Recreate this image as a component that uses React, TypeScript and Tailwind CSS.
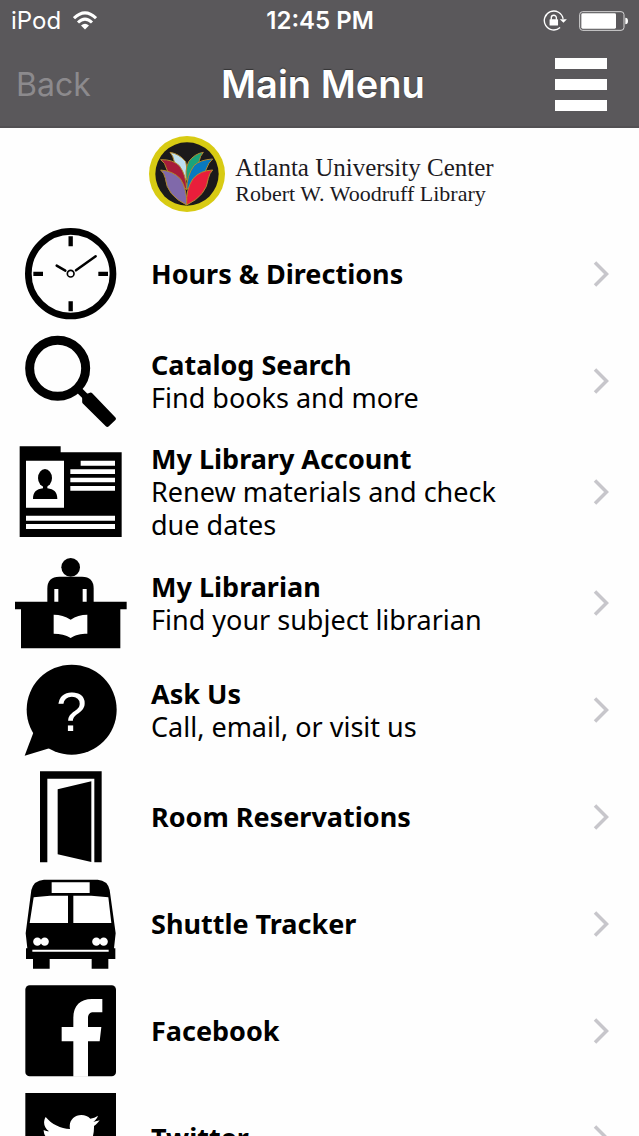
import type { ReactNode } from "react";

type MenuItem = {
  title: string;
  detail?: string;
  viewBox: string;
  icon: ReactNode;
};

const items: MenuItem[] = [
  {
    title: "Hours & Directions",
    viewBox: "45 21 336 276",
    icon: (
      <>
        <circle cx="212" cy="158" r="127" fill="none" stroke="#000" strokeWidth="20" />
        <path d="M212 46v30M212 241v30M100 158.500h29M295 158.500h29" stroke="#000" strokeWidth="13" />
        <path d="M228 148L287 106M196 149L170 134" stroke="#000" strokeWidth="7.500" strokeLinecap="round" />
        <circle cx="212" cy="158" r="10" fill="none" stroke="#000" strokeWidth="5" />
      </>
    ),
  },
  {
    title: "Catalog Search",
    detail: "Find books and more",
    viewBox: "45 342 336 276",
    icon: (
      <>
        <circle cx="173" cy="442" r="84" fill="none" stroke="#000" strokeWidth="27" />
        <path d="M232 502L262 532" stroke="#000" strokeWidth="20" />
        <path
          d="M253 528L272 521L341 593L322 611L253 543Z"
          stroke="#000"
          strokeWidth="13"
          strokeLinejoin="round"
        />
      </>
    ),
  },
  {
    title: "My Library Account",
    detail: "Renew materials and check due dates",
    viewBox: "45 31 336 276",
    icon: (
      <>
        <path d="M59 32H182V50H365V304H59Z" />
        <path
          d="M78 75H192V216H78ZM242 75H345V90H242ZM211 101H345V115H211ZM211 126H345V140H211ZM211 151H345V165H211ZM78 240H345V255H78ZM78 265H345V280H78Z"
          fill="#fff"
        />
        <ellipse cx="135" cy="127" rx="21" ry="27" />
        <path d="M129 148H142V158C162 160 172 170 172 190H99C99 170 109 160 129 158Z" />
      </>
    ),
  },
  {
    title: "My Librarian",
    detail: "Find your subject librarian",
    viewBox: "45 361 336 276",
    icon: (
      <>
        <circle cx="212" cy="392" r="28" />
        <path d="M142 498V456Q142 420 178 420H246Q281 420 281 456V498Z" />
        <path d="M45 495H380V518H361V635H63V518H45Z" />
        <path d="M163 457H175V495H163ZM248 457H260V495H248Z" fill="#fff" />
        <path
          d="M161 534C180 534 196 538 212 549C227 538 243 534 262 534V591C242 591 226 594 212 604C197 594 181 591 161 591Z"
          fill="#fff"
        />
      </>
    ),
  },
  {
    title: "Ask Us",
    detail: "Call, email, or visit us",
    viewBox: "45 24 336 276",
    icon: (
      <>
        <circle cx="215" cy="161" r="135" />
        <path d="M100 230L74 299L148 277L170 240Z" />
        <text
          x="214"
          y="225"
          textAnchor="middle"
          fill="#fff"
          className="font-['Liberation_Sans',sans-serif] text-[164px]"
        >
          ?
        </text>
      </>
    ),
  },
  {
    title: "Room Reservations",
    viewBox: "45 348 336 276",
    icon: <path d="M120 349H305V622H283V371H142V622H120ZM173 403L274 379V621L173 598Z" />,
  },
  {
    title: "Shuttle Tracker",
    viewBox: "45 24 336 276",
    icon: (
      <>
        <path d="M132 29H293Q323 31 329 60L347 190L342 235H346V267H325V296H275V267H149V296H99V267H78V235H82L77 190L94 60Q101 31 132 29Z" />
        <path
          d="M155 37H269V69H155ZM101 82L150 77H204V159H89ZM220 77H274L325 82L334 159H220ZM97 239H326V245H97Z"
          fill="#fff"
        />
        <g fill="#fff">
          <circle cx="112" cy="215" r="12.500" />
          <circle cx="134" cy="215" r="12.500" />
          <circle cx="289" cy="215" r="12.500" />
          <circle cx="311" cy="215" r="12.500" />
        </g>
      </>
    ),
  },
  {
    title: "Facebook",
    viewBox: "45 348 336 276",
    icon: (
      <>
        <rect x="76" y="349" width="272" height="273" rx="13" />
        <path
          d="M220 623V517H185V474H220V446C220 410 241 390 276 390H307V430H281C269 430 264 436 264 448V474H304L299 517H264V623Z"
          fill="#fff"
        />
      </>
    ),
  },
  {
    title: "Twitter",
    viewBox: "45 669 336 276",
    icon: (
      <>
        <rect x="76" y="672" width="272" height="272" />
        <path
          d="M137 744C155 766 182 779 210 780C205 755 223 738 244 738C255 738 264 742 271 749C279 748 287 744 294 740C291 748 286 754 280 758C287 757 293 756 299 753C295 760 289 766 282 771C284 832 239 874 181 874C161 874 142 868 126 858C145 860 163 855 177 844C161 843 149 833 144 819C150 820 155 820 160 818C143 814 131 800 131 783C136 785 142 787 147 787C132 777 128 759 137 744Z"
          fill="#fff"
        />
      </>
    ),
  },
];

function StatusBar() {
  return (
    <div className="flex h-[41px] items-center justify-between px-[11px] text-2xl">
      <div className="flex items-center gap-3">
        <span>iPod</span>
        <svg viewBox="0 0 72 56" className="h-[19px] w-6" fill="none" stroke="#fff" strokeWidth="9">
          <path d="M3 21Q36 -11 69 21" />
          <path d="M15 34Q36 14 57 34" />
          <path d="M24 43Q36 33 48 43L36 55Z" fill="#fff" stroke="none" />
        </svg>
      </div>
      <span className="font-semibold whitespace-nowrap">12:45 PM</span>
      <div className="flex items-center gap-3">
        <svg viewBox="0 0 70 62" className="h-[21px] w-6" fill="none" stroke="#fff">
          <path d="M59 26A28 28 0 1 0 50 52" strokeWidth="4" />
          <path d="M49 27H70L60 38Z" fill="#fff" stroke="none" />
          <rect x="19" y="27" width="25" height="19" rx="2" fill="#fff" stroke="none" />
          <path d="M24 29V23A7.500 7.500 0 0 1 39 23V29" strokeWidth="4" />
        </svg>
        <svg viewBox="0 0 147 60" className="h-5 w-[49px]">
          <rect x="2" y="2" width="133" height="56" rx="9" fill="none" stroke="#d6d5d6" strokeWidth="3" />
          <rect x="7" y="7" width="104" height="46" rx="4" fill="#fff" />
          <path d="M139 20Q147 20 147 30T139 40Z" fill="#fff" />
        </svg>
      </div>
    </div>
  );
}

function Emblem() {
  return (
    <svg viewBox="0 0 228 228" className="size-[76px] shrink-0">
      <circle cx="114" cy="114" r="114" fill="#d8cb13" />
      <circle cx="114" cy="114" r="95" fill="#1b191b" />
      <g stroke="#b28a2e" strokeWidth="3" strokeLinejoin="round">
        <path d="M63 49Q90 53 110 77Q119 105 113 132Q80 110 75 74Q73 60 63 49Z" fill="#bfe0f1" />
        <path d="M163 49Q137 53 119 77Q106 105 114 134Q147 110 151 74Q153 60 163 49Z" fill="#1aa37b" />
        <path d="M35 71Q72 70 91 89Q112 117 113 160Q66 139 53 99Q49 80 35 71Z" fill="#a71c3a" />
        <path d="M191 69Q153 71 135 89Q113 119 113 160Q159 139 172 99Q178 80 191 69Z" fill="#0879bf" />
        <path d="M35 102Q72 105 94 128Q115 160 113 207Q53 178 49 127Q46 112 35 102Z" fill="#8069aa" />
        <path d="M191 102Q154 103 132 128Q110 160 113 207Q173 178 178 127Q181 112 191 102Z" fill="#e91e3b" />
      </g>
    </svg>
  );
}

export default function App() {
  return (
    <div className="flex h-screen flex-col overflow-hidden bg-[#fefefe] text-black">
      <header className="shrink-0 bg-[#5a585b] font-[Inter,sans-serif] text-white shadow-[inset_0_-2px_0_#525053]">
        <StatusBar />
        <div className="flex h-[87px] items-center justify-between pr-8 pl-4">
          <button type="button" disabled className="text-[32px] text-[#8c8a8d]">
            Back
          </button>
          <h1 className="text-[38px] font-semibold whitespace-nowrap [text-shadow:0_-1px_1px_#333]">
            Main Menu
          </h1>
          <button type="button" aria-label="Menu" className="flex flex-col gap-[10px]">
            <span className="h-[11px] w-[52px] bg-white" />
            <span className="h-[11px] w-[52px] bg-white" />
            <span className="h-[11px] w-[52px] bg-white" />
          </button>
        </div>
      </header>

      <main className="min-h-0 flex-1 overflow-y-auto [scrollbar-width:none]">
        <div className="flex h-[92px] items-center justify-center gap-[10px] pl-1 font-['Liberation_Serif',serif] text-[#1c1a1f]">
          <Emblem />
          <div className="pt-3 whitespace-nowrap">
            <p className="text-[25px] leading-7">Atlanta University Center</p>
            <p className="text-[22px] leading-6">Robert W. Woodruff Library</p>
          </div>
        </div>

        <nav aria-label="Main menu">
          <ul>
            {items.map((item) => (
              <li key={item.title}>
                <a
                  href="#"
                  className="flex min-h-[107px] items-center gap-6 pr-[30px] pl-[15px] font-['Noto_Sans',sans-serif] text-[27px] leading-[33px]"
                >
                  <svg viewBox={item.viewBox} className="h-[92px] w-28 shrink-0" aria-hidden="true">
                    {item.icon}
                  </svg>
                  <span className="flex-1 py-2 pr-[60px]">
                    <span className="block font-bold">{item.title}</span>
                    {item.detail && <span className="block">{item.detail}</span>}
                  </span>
                  <svg
                    viewBox="0 0 16 26"
                    className="h-[26px] w-4 shrink-0"
                    fill="none"
                    stroke="#c7c6cb"
                    strokeWidth="3.500"
                    aria-hidden="true"
                  >
                    <path d="M2 1.500L13.500 13L2 24.500" />
                  </svg>
                </a>
              </li>
            ))}
          </ul>
        </nav>
      </main>
    </div>
  );
}
